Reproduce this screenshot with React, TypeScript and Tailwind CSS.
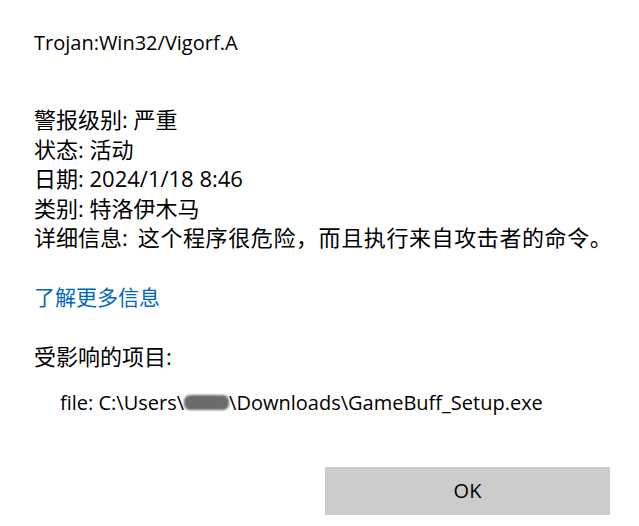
import React from "react";

export default function App() {
  const font = { fontFamily: '"Open Sans", "Noto Sans CJK SC", sans-serif' };
  return (
    <div
      className="w-[639px] h-[526px] bg-white text-[#000000] text-[20px] leading-[29.5px] flex flex-col pl-[34px] pr-[29px] pt-[28px]"
      style={font}
    >
      <div>Trojan:Win32/Vigorf.A</div>
      <div className="mt-[47.5px] flex flex-col text-[22px]">
        <div>警报级别: 严重</div>
        <div>状态: 活动</div>
        <div>日期: 2024/1/18 8:46</div>
        <div>类别: 特洛伊木马</div>
        <div className="whitespace-nowrap">
          详细信息:<span className="ml-[10px] tracking-[0.6px]">这个程序很危险，而且执行来自攻击者的命令。</span>
        </div>
      </div>
      <div className="mt-[30.5px] text-[#0067c0] text-[21px]">了解更多信息</div>
      <div className="mt-[29.5px] text-[22px]">受影响的项目:</div>
      <div className="mt-[16.5px] pl-[26px] flex items-center whitespace-nowrap">
        <span>file: C:\Users\</span>
        <span className="inline-block w-[45px] h-[15px] rounded-[6px] bg-[#6b6b6b] blur-[1px]" />
        <span>\Downloads\GameBuff_Setup.exe</span>
      </div>
      <div className="mt-[49.5px] flex justify-end">
        <button className="w-[285px] h-[48px] bg-[#cccccc] text-[20px] flex items-center justify-center">
          OK
        </button>
      </div>
    </div>
  );
}
